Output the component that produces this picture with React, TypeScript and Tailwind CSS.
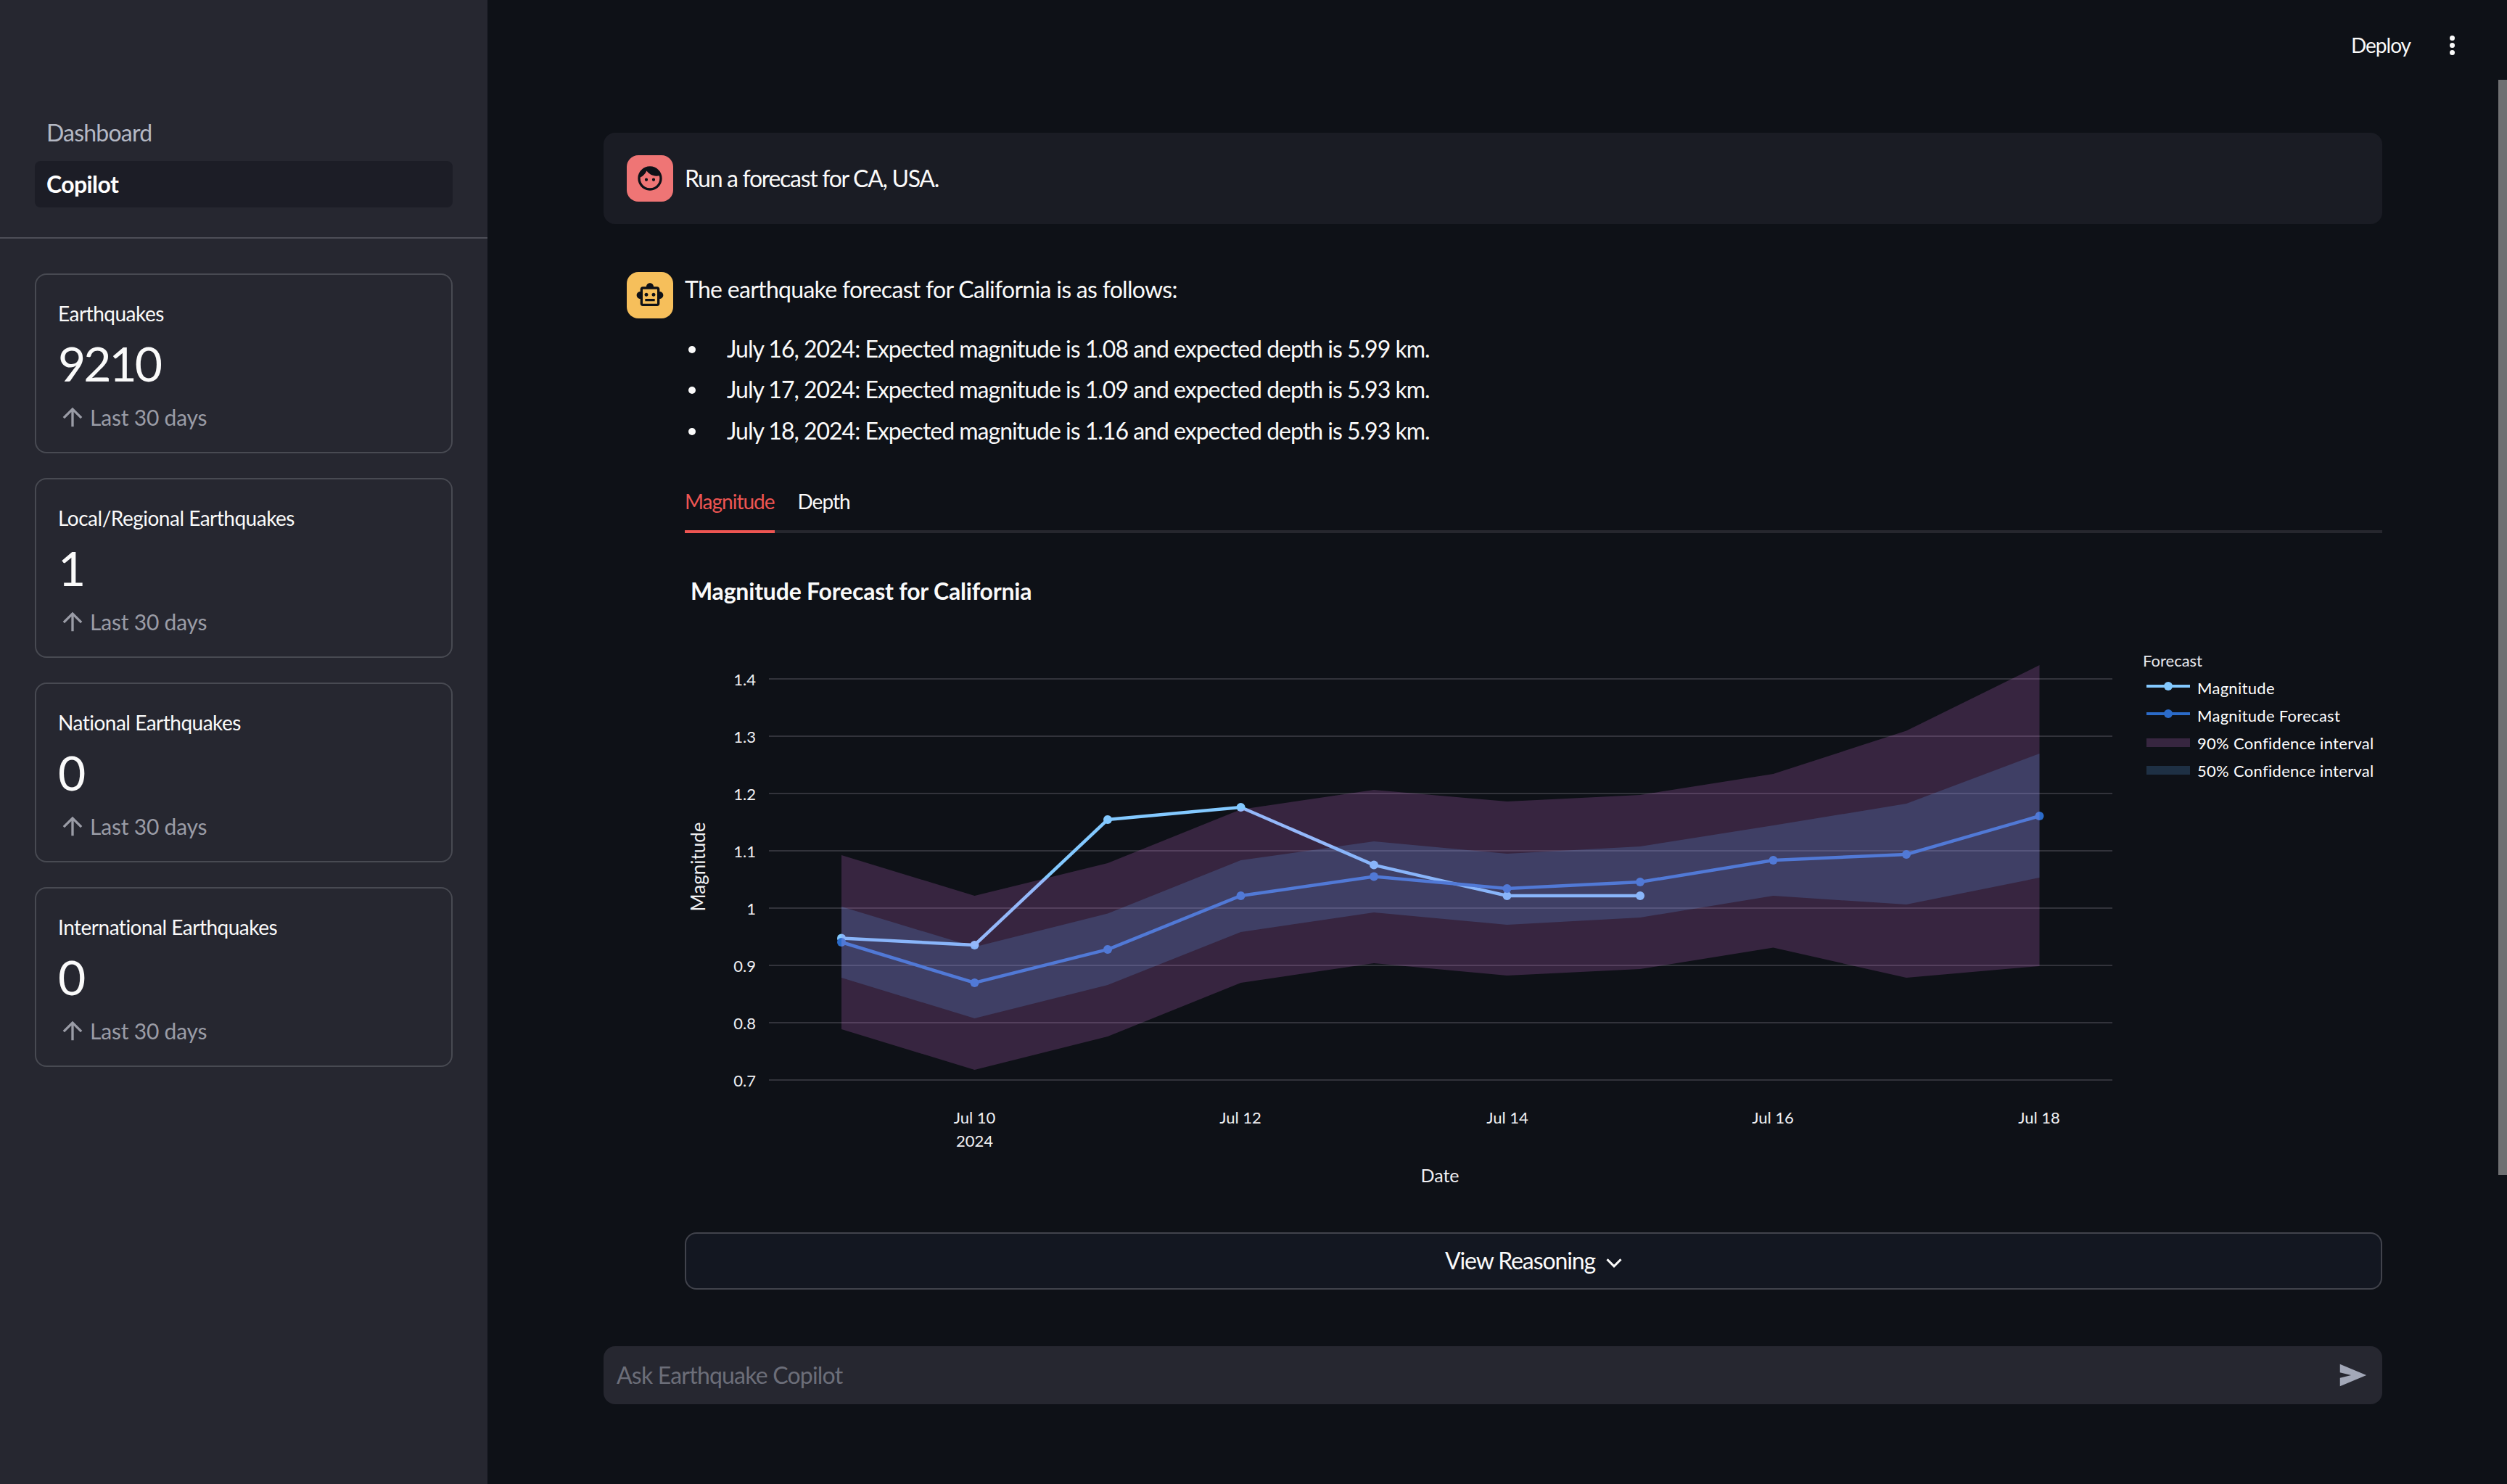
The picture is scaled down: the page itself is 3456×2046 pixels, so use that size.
const xAt = (i: number) => 1160 + 183.5 * i;
const toPoints = (ys: number[]) => ys.map((y, i) => `${xAt(i)},${y}`).join(" ");
const toBand = (upper: number[], lower: number[]) =>
  [...upper.map((y, i) => `${xAt(i)},${y}`), ...lower.map((y, i) => `${xAt(i)},${y}`).reverse()].join(" ");

const magnitude = [1293.5, 1303, 1130, 1113, 1192.6, 1235, 1235];
const forecast = [1299, 1355, 1309, 1235, 1208.6, 1225, 1216, 1186, 1178, 1125];
const upper90 = [1179, 1235, 1190, 1116, 1089, 1105, 1096, 1067, 1007.5, 917];
const lower90 = [1419, 1475, 1429, 1355, 1328, 1345, 1336, 1306.6, 1348, 1332];
const upper50 = [1250, 1305.6, 1259.5, 1186, 1160, 1177, 1167, 1138, 1108, 1039];
const lower50 = [1348, 1404, 1358, 1285, 1258, 1275, 1265, 1235, 1247, 1210];

const yTicks = [
  { label: "1.4", y: 936 },
  { label: "1.3", y: 1015 },
  { label: "1.2", y: 1094 },
  { label: "1.1", y: 1173 },
  { label: "1", y: 1252 },
  { label: "0.9", y: 1331 },
  { label: "0.8", y: 1410 },
  { label: "0.7", y: 1489 },
];
const xTicks = [
  { label: "Jul 10", x: 1343.5 },
  { label: "Jul 12", x: 1710 },
  { label: "Jul 14", x: 2078 },
  { label: "Jul 16", x: 2444 },
  { label: "Jul 18", x: 2811 },
];

const metrics = [
  { label: "Earthquakes", value: "9210" },
  { label: "Local/Regional Earthquakes", value: "1" },
  { label: "National Earthquakes", value: "0" },
  { label: "International Earthquakes", value: "0" },
];

const bullets = [
  "July 16, 2024: Expected magnitude is 1.08 and expected depth is 5.99 km.",
  "July 17, 2024: Expected magnitude is 1.09 and expected depth is 5.93 km.",
  "July 18, 2024: Expected magnitude is 1.16 and expected depth is 5.93 km.",
];

function MetricCard({ label, value }: { label: string; value: string }) {
  return (
    <div className="h-[248px] rounded-2xl border-2 border-[#484a52] px-[30px] pt-[34px]">
      <div className="text-[28px] leading-[38px] tracking-[-0.5px] text-[#fafafa]">{label}</div>
      <div className="mt-[8px] text-[66px] leading-[84px] tracking-[-3px] text-[#fafafa]">{value}</div>
      <div className="mt-[12px] flex h-[40px] items-center text-[30px] tracking-[-0.2px] text-[#9a9ca6]">
        <svg viewBox="0 0 24 24" className="mr-[4px] h-[40px] w-[40px] fill-current">
          <path d="M4 12l1.41 1.41L11 7.83V20h2V7.83l5.58 5.59L20 12l-8-8-8 8z" />
        </svg>
        Last 30 days
      </div>
    </div>
  );
}

function Sidebar() {
  return (
    <aside className="h-full w-[672px] shrink-0 bg-[#262730] pt-[151px]">
      <nav className="flex flex-col gap-[7px] px-12">
        <div className="flex h-[64px] items-center px-4 text-[32px] tracking-[-0.8px] text-[#b4b8c4]">Dashboard</div>
        <div className="flex h-[64px] items-center rounded-lg bg-[#1c1d26] px-4 text-[32px] font-bold tracking-[-0.6px] text-white">
          Copilot
        </div>
      </nav>
      <div className="mt-[41px] h-[2px] bg-[#4d4e57]" />
      <div className="mt-[48px] flex flex-col gap-[34px] px-12">
        {metrics.map((m) => (
          <MetricCard key={m.label} label={m.label} value={m.value} />
        ))}
      </div>
    </aside>
  );
}

function ForecastChart() {
  return (
    <svg viewBox="944 735 2340 948" className="block h-[948px] w-[2340px]">
      <text x="952" y="814" dominantBaseline="central" className="fill-[#fafafa] text-[32px] font-bold tracking-[-0.2px]">
        Magnitude Forecast for California
      </text>

      {yTicks.map((t) => (
        <g key={t.label}>
          <line x1="1060" x2="2912" y1={t.y} y2={t.y} stroke="#32333b" strokeWidth="2" />
          <text x="1042" y={t.y} textAnchor="end" dominantBaseline="central" className="fill-[#f0f0f3] text-[22px]">
            {t.label}
          </text>
        </g>
      ))}
      {xTicks.map((t) => (
        <text key={t.label} x={t.x} y="1540" textAnchor="middle" dominantBaseline="central" className="fill-[#f0f0f3] text-[22px]">
          {t.label}
        </text>
      ))}
      <text x="1343.5" y="1572" textAnchor="middle" dominantBaseline="central" className="fill-[#f0f0f3] text-[22px]">
        2024
      </text>
      <text x="1985" y="1620" textAnchor="middle" dominantBaseline="central" className="fill-[#f0f0f3] text-[25px]">
        Date
      </text>
      <text
        x="962"
        y="1195"
        textAnchor="middle"
        dominantBaseline="central"
        transform="rotate(-90 962 1195)"
        className="fill-[#f0f0f3] text-[26px]"
      >
        Magnitude
      </text>

      {/* lines sit under the bands, that is why they shift colour inside them */}
      <polyline points={toPoints(magnitude)} fill="none" stroke="#83c9ff" strokeWidth="4.5" />
      {magnitude.map((y, i) => (
        <circle key={i} cx={xAt(i)} cy={y} r="6" fill="#83c9ff" />
      ))}
      <polyline points={toPoints(forecast)} fill="none" stroke="#2b6bc9" strokeWidth="4.5" />
      {forecast.map((y, i) => (
        <circle key={i} cx={xAt(i)} cy={y} r="6" fill="#2b6bc9" />
      ))}
      <polygon points={toBand(upper90, lower90)} fill="#db7ae4" fillOpacity="0.2" />
      <polygon points={toBand(upper50, lower50)} fill="#5eacf8" fillOpacity="0.2" />

      <text x="2954" y="910" dominantBaseline="central" className="fill-[#e8e8ec] text-[22px]">
        Forecast
      </text>
      <line x1="2959" x2="3019" y1="946" y2="946" stroke="#83c9ff" strokeWidth="4" />
      <circle cx="2989" cy="946" r="6" fill="#83c9ff" />
      <text x="3029" y="948" dominantBaseline="central" className="fill-white text-[22px] tracking-[0.3px]">
        Magnitude
      </text>
      <line x1="2959" x2="3019" y1="984" y2="984" stroke="#2b6bc9" strokeWidth="4" />
      <circle cx="2989" cy="984" r="6" fill="#2b6bc9" />
      <text x="3029" y="986" dominantBaseline="central" className="fill-white text-[22px] tracking-[0.3px]">
        Magnitude Forecast
      </text>
      <rect x="2959" y="1018" width="60" height="12" fill="#372640" />
      <text x="3029" y="1024" dominantBaseline="central" className="fill-white text-[22px] tracking-[0.3px]">
        90% Confidence interval
      </text>
      <rect x="2959" y="1056" width="60" height="12" fill="#1e3044" />
      <text x="3029" y="1062" dominantBaseline="central" className="fill-white text-[22px] tracking-[0.3px]">
        50% Confidence interval
      </text>
    </svg>
  );
}

export default function App() {
  return (
    <div className="relative flex h-[2046px] w-[3456px] overflow-hidden bg-[#0e1117] font-['Lato',sans-serif] text-[#fafafa]">
      <Sidebar />
      <main className="min-w-0 flex-1 pl-[160px] pr-[172px]">
        <header className="-mr-[172px] flex h-[124px] items-center justify-end pr-[72px]">
          <span className="text-[28px] tracking-[-1px]">Deploy</span>
          <span className="ml-[54px] flex flex-col gap-[3px]">
            <span className="h-[7px] w-[7px] rounded-full bg-[#fafafa]" />
            <span className="h-[7px] w-[7px] rounded-full bg-[#fafafa]" />
            <span className="h-[7px] w-[7px] rounded-full bg-[#fafafa]" />
          </span>
        </header>

        <section className="mt-[59px] flex h-[126px] items-center gap-4 rounded-2xl bg-[#1a1c24] pl-8">
          <div className="flex h-16 w-16 items-center justify-center rounded-2xl bg-[#ef7575]">
            <svg viewBox="0 0 24 24" className="h-10 w-10 fill-[#0e1117]">
              <path d="M9 11.75c-.69 0-1.25.56-1.25 1.25s.56 1.25 1.25 1.25 1.25-.56 1.25-1.25-.56-1.25-1.25-1.25zm6 0c-.69 0-1.25.56-1.25 1.25s.56 1.25 1.25 1.25 1.25-.56 1.25-1.25-.56-1.25-1.25-1.25zM12 2C6.48 2 2 6.48 2 12s4.48 10 10 10 10-4.48 10-10S17.52 2 12 2zm0 18c-4.41 0-8-3.59-8-8 0-.29.02-.58.05-.86 2.36-1.05 4.23-2.98 5.21-5.37C11.07 8.33 14.05 10 17.42 10c.78 0 1.53-.09 2.25-.26.21.71.33 1.47.33 2.26 0 4.41-3.59 8-8 8z" />
            </svg>
          </div>
          <p className="text-[32px] tracking-[-1.3px]">Run a forecast for CA, USA.</p>
        </section>

        <section className="mt-[66px] flex gap-4 pl-8">
          <div className="flex h-16 w-16 shrink-0 items-center justify-center rounded-2xl bg-[#f6bf5b]">
            <svg viewBox="0 0 24 24" className="h-10 w-10 fill-[#0e1117]">
              <path d="M20 9V7c0-1.1-.9-2-2-2h-3c0-1.66-1.34-3-3-3S9 3.34 9 5H6c-1.1 0-2 .9-2 2v2c-1.66 0-3 1.34-3 3s1.34 3 3 3v4c0 1.1.9 2 2 2h12c1.1 0 2-.9 2-2v-4c1.66 0 3-1.34 3-3s-1.34-3-3-3zm-2 10H6V7h12v12zm-9-6c-.83 0-1.5-.67-1.5-1.5S8.17 10 9 10s1.5.67 1.5 1.5S9.83 13 9 13zm7.5-1.5c0 .83-.67 1.5-1.5 1.5s-1.5-.67-1.5-1.5.67-1.5 1.5-1.5 1.5.67 1.5 1.5zM8 15h8v2H8v-2z" />
            </svg>
          </div>
          <div className="min-w-0 flex-1">
            <p className="text-[32px] leading-[48px] tracking-[-0.7px]">The earthquake forecast for California is as follows:</p>
            <ul className="mt-[33.5px] flex flex-col gap-[8.6px] pl-[58px]">
              {bullets.map((b) => (
                <li key={b} className="relative text-[32px] leading-[48px] tracking-[-1px]">
                  <span className="absolute -left-[53px] top-[20px] h-[10px] w-[10px] rounded-full bg-[#fafafa]" />
                  {b}
                </li>
              ))}
            </ul>
            <div className="mt-[42.3px] flex h-[75px] gap-8 border-b-4 border-[#26272e] text-[28px] tracking-[-1px]">
              <div className="-mb-1 h-[75px] border-b-4 border-[#ee5552] pt-[13px] leading-[36px] text-[#ee5552]">Magnitude</div>
              <div className="pt-[13px] leading-[36px]">Depth</div>
            </div>
            <ForecastChart />
            <button className="mt-[16px] flex h-[79px] w-full items-center justify-center gap-[7px] rounded-2xl border-2 border-[#41434c] bg-[#131721] pl-[8px] text-[32px] tracking-[-1.1px] text-[#fafafa]">
              View Reasoning
              <svg viewBox="0 0 24 24" className="mt-[6px] h-[38px] w-[38px] fill-none stroke-[#fafafa] stroke-2">
                <path d="M6 9l6 6 6-6" />
              </svg>
            </button>
          </div>
        </section>

        <div className="mt-[78px] flex h-[80px] items-center justify-between rounded-2xl bg-[#262730] pl-[18px] pr-[18px]">
          <span className="text-[32px] tracking-[-0.8px] text-[#6c6e79]">Ask Earthquake Copilot</span>
          <svg viewBox="0 0 24 24" className="h-[46px] w-[46px] fill-[#a3a8b8]">
            <path d="M3 20v-6l8-2-8-2V4l19 8z" />
          </svg>
        </div>
      </main>
      <div className="absolute right-0 top-[110px] h-[1510px] w-[12px] bg-[#6f7072]" />
    </div>
  );
}
